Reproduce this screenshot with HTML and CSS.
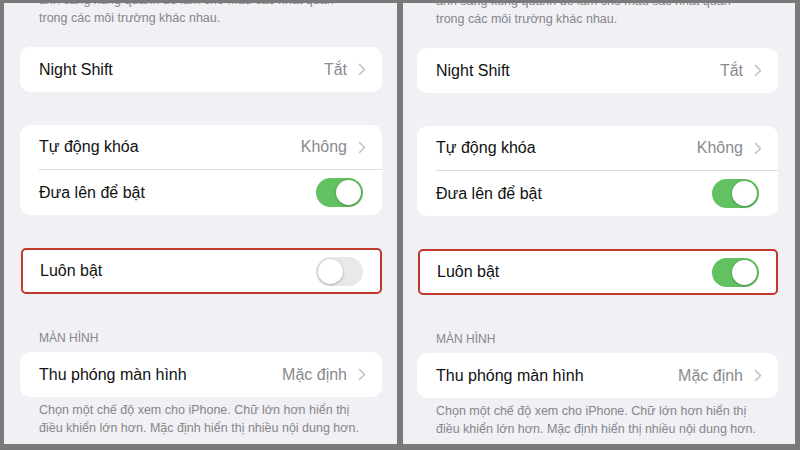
FILE: index.html
```html
<!DOCTYPE html>
<html lang="vi">
<head>
<meta charset="utf-8">
<link rel="stylesheet" href="styles.css">
</head>
<body>
<div class="frame">
  <div class="panel">
    <p class="note note-top">ánh sáng xung quanh để làm cho màu sắc nhất quán<br>trong các môi trường khác nhau.</p>
    <div class="card card-first">
      <div class="row"><div class="row-body"><span class="label">Night Shift</span><span class="value">Tắt<svg class="chev" viewBox="0 0 8 13"><path d="M1.5 1.5 L6.5 6.5 L1.5 11.5"/></svg></span></div></div>
    </div>
    <div class="card">
      <div class="row"><div class="row-body sep"><span class="label">Tự động khóa</span><span class="value">Không<svg class="chev" viewBox="0 0 8 13"><path d="M1.5 1.5 L6.5 6.5 L1.5 11.5"/></svg></span></div></div>
      <div class="row"><div class="row-body"><span class="label">Đưa lên để bật</span><span class="toggle on"><span class="knob"></span></span></div></div>
    </div>
    <div class="card card-hl">
      <div class="row"><div class="row-body"><span class="label">Luôn bật</span><span class="toggle"><span class="knob"></span></span></div></div>
    </div>
    <p class="header">MÀN HÌNH</p>
    <div class="card card-tight">
      <div class="row"><div class="row-body"><span class="label">Thu phóng màn hình</span><span class="value">Mặc định<svg class="chev" viewBox="0 0 8 13"><path d="M1.5 1.5 L6.5 6.5 L1.5 11.5"/></svg></span></div></div>
    </div>
    <p class="note note-bottom">Chọn một chế độ xem cho iPhone. Chữ lớn hơn hiển thị<br>điều khiển lớn hơn. Mặc định hiển thị nhiều nội dung hơn.</p>
  </div>
  <div class="panel panel-right">
    <p class="note note-top">ánh sáng xung quanh để làm cho màu sắc nhất quán<br>trong các môi trường khác nhau.</p>
    <div class="card card-first">
      <div class="row"><div class="row-body"><span class="label">Night Shift</span><span class="value">Tắt<svg class="chev" viewBox="0 0 8 13"><path d="M1.5 1.5 L6.5 6.5 L1.5 11.5"/></svg></span></div></div>
    </div>
    <div class="card">
      <div class="row"><div class="row-body sep"><span class="label">Tự động khóa</span><span class="value">Không<svg class="chev" viewBox="0 0 8 13"><path d="M1.5 1.5 L6.5 6.5 L1.5 11.5"/></svg></span></div></div>
      <div class="row"><div class="row-body"><span class="label">Đưa lên để bật</span><span class="toggle on"><span class="knob"></span></span></div></div>
    </div>
    <div class="card card-hl">
      <div class="row"><div class="row-body"><span class="label">Luôn bật</span><span class="toggle on"><span class="knob"></span></span></div></div>
    </div>
    <p class="header">MÀN HÌNH</p>
    <div class="card card-tight">
      <div class="row"><div class="row-body"><span class="label">Thu phóng màn hình</span><span class="value">Mặc định<svg class="chev" viewBox="0 0 8 13"><path d="M1.5 1.5 L6.5 6.5 L1.5 11.5"/></svg></span></div></div>
    </div>
    <p class="note note-bottom">Chọn một chế độ xem cho iPhone. Chữ lớn hơn hiển thị<br>điều khiển lớn hơn. Mặc định hiển thị nhiều nội dung hơn.</p>
  </div>
</div>
</body>
</html>
```
FILE: styles.css
```css
html, body {
  margin: 0;
  padding: 0;
}
body {
  background: #7a7a7a;
  font-family: "Liberation Sans", Arial, sans-serif;
  color: #111;
}
.frame {
  width: 800px;
  height: 450px;
  box-sizing: border-box;
  padding: 3px 5px 6px 4px;
  display: flex;
  gap: 6px;
}
.panel {
  flex: 0 0 393px;
  background: #f0f0f5;
  overflow: hidden;
  display: flex;
  flex-direction: column;
  padding: 0 15px 0 16px;
  box-sizing: border-box;
}
.panel-right {
  flex-basis: 392px;
  padding: 1px 17px 0 14px;
}
.note {
  margin: 0;
  padding: 0 19px;
  font-size: 12.5px;
  line-height: 18px;
  color: #86868b;
  white-space: nowrap;
}
.note-top {
  margin-top: -12px;
}
.note-bottom {
  margin-top: 4px;
}
.card {
  background: #fff;
  border-radius: 10px;
  margin-top: 33px;
}
.card-first {
  margin-top: 20px;
}
.card-tight {
  margin-top: 6px;
}
.card-hl {
  border: 2px solid #c0392b;
  border-radius: 5px;
  margin-left: 1px;
  margin-right: 0;
}
.card-hl .row {
  height: 42px;
  padding-left: 17px;
}
.card-hl .row-body {
  padding-right: 17px;
}
.row {
  height: 45px;
  padding-left: 19px;
  display: flex;
}
.row-body {
  flex: 1;
  display: flex;
  align-items: center;
  justify-content: space-between;
  padding-right: 19px;
  box-sizing: border-box;
}
.row-body.sep {
  border-bottom: 1px solid #dcdce0;
}
.label {
  font-size: 16px;
  color: #111;
}
.value {
  font-size: 16px;
  color: #8a8a8e;
  display: flex;
  align-items: center;
  gap: 11px;
  margin-right: -3px;
}
.chev {
  width: 8px;
  height: 13px;
  fill: none;
  stroke: #c4c4c8;
  stroke-width: 1.7;
  stroke-linecap: round;
  stroke-linejoin: round;
}
.toggle {
  width: 47px;
  height: 29px;
  border-radius: 15px;
  background: #e9e9eb;
  display: flex;
  align-items: center;
  padding: 2px;
  box-sizing: border-box;
}
.toggle.on {
  background: #62c262;
  justify-content: flex-end;
}
.knob {
  width: 25px;
  height: 25px;
  border-radius: 50%;
  background: #fff;
  box-shadow: 0 1px 3px rgba(0,0,0,0.25), 0 0 0 0.5px rgba(0,0,0,0.06);
}
.header {
  margin: 36px 0 0;
  padding: 0 19px;
  font-size: 12px;
  line-height: 16px;
  color: #86868b;
}
```
